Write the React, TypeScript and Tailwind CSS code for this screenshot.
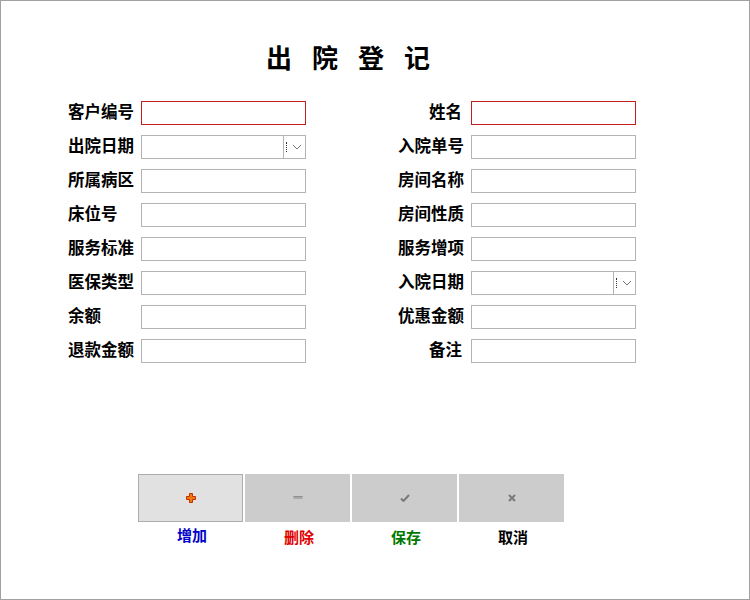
import React from "react";

const font = { fontFamily: '"Noto Sans CJK SC", "Liberation Sans", sans-serif' };

function Input({ red }: { red?: boolean }) {
  return (
    <div
      className={
        "h-[24px] w-[165px] bg-white border " +
        (red ? "border-[#c41e1e]" : "border-[#b4b4b4]")
      }
    />
  );
}

function DateInput() {
  return (
    <div className="h-[24px] w-[165px] flex border border-[#b4b4b4] bg-white">
      <div className="flex-1 border-r border-[#b4b4b4]" />
      <div className="w-[21px] flex items-center">
        <div className="ml-[2px] h-[10px] w-0 border-l border-dotted border-[#333]" />
        <svg width="10" height="6" viewBox="0 0 10 6" className="ml-[5px]">
          <path d="M1 1 L5 5 L9 1" fill="none" stroke="#777" strokeWidth="1" />
        </svg>
      </div>
    </div>
  );
}

function Label({ text, pl = 0 }: { text: string; pl?: number }) {
  return (
    <div
      className="w-[73px] h-[24px] flex items-center pb-[3px] text-[16.5px] font-bold text-black leading-none"
      style={{ paddingLeft: pl }}
    >
      {text}
    </div>
  );
}

type Field = { label: string; pl?: number; kind?: "red" | "date" | "plain" };

const left: Field[] = [
  { label: "客户编号", kind: "red" },
  { label: "出院日期", kind: "date" },
  { label: "所属病区" },
  { label: "床位号" },
  { label: "服务标准" },
  { label: "医保类型" },
  { label: "余额" },
  { label: "退款金额" },
];

const right: Field[] = [
  { label: "姓名", pl: 31, kind: "red" },
  { label: "入院单号" },
  { label: "房间名称" },
  { label: "房间性质" },
  { label: "服务增项" },
  { label: "入院日期", kind: "date" },
  { label: "优惠金额" },
  { label: "备注", pl: 31 },
];

function Col({ items }: { items: Field[] }) {
  return (
    <div className="flex flex-col gap-[10px]">
      {items.map((f) => (
        <div key={f.label} className="flex items-center">
          <Label text={f.label} pl={f.pl} />
          {f.kind === "date" ? <DateInput /> : <Input red={f.kind === "red"} />}
        </div>
      ))}
    </div>
  );
}

function PlusIcon() {
  return (
    <svg width="10" height="10" viewBox="0 0 10 10">
      <path d="M3.5 0.5h3v3h3v3h-3v3h-3v-3h-3v-3h3z" fill="#f07a10" stroke="#c03000" strokeWidth="1" />
    </svg>
  );
}
function MinusIcon() {
  return (
    <svg width="10" height="6" viewBox="0 0 10 6">
      <rect x="0.5" y="1" width="9" height="3" fill="#a8a8a8" />
      <rect x="0.5" y="1" width="9" height="1" fill="#909090" />
    </svg>
  );
}
function CheckIcon() {
  return (
    <svg width="10" height="8" viewBox="0 0 10 8">
      <path d="M1 4.5 L3.5 7 L9 1" fill="none" stroke="#7a7a7a" strokeWidth="2" />
    </svg>
  );
}
function XIcon() {
  return (
    <svg width="8" height="8" viewBox="0 0 8 8">
      <path d="M1 1 L7 7 M7 1 L1 7" fill="none" stroke="#7a7a7a" strokeWidth="2" />
    </svg>
  );
}

const buttons = [
  { label: "增加", color: "text-[#0000c8]", icon: <PlusIcon />, bg: "bg-[#e1e1e1] border border-[#adadad]", mt: "mt-[3px]" },
  { label: "删除", color: "text-[#e00000]", icon: <MinusIcon />, bg: "bg-[#cccccc]", mt: "mt-[5px]" },
  { label: "保存", color: "text-[#007a00]", icon: <CheckIcon />, bg: "bg-[#cccccc]", mt: "mt-[5px]" },
  { label: "取消", color: "text-black", icon: <XIcon />, bg: "bg-[#cccccc]", mt: "mt-[5px]" },
];

export default function App() {
  return (
    <div
      className="w-[750px] h-[600px] border border-[#a0a0a0] bg-white box-border flex flex-col"
      style={font}
    >
      <div className="pt-[41px] flex justify-center pr-[34px]">
        <div className="text-[26px] font-bold leading-[30px] tracking-[20px] text-black">出院登记</div>
      </div>
      <div className="mt-[29px] flex pl-[67px] gap-[92px]">
        <Col items={left} />
        <Col items={right} />
      </div>
      <div className="mt-[111px] flex pl-[137px] gap-[2px]">
        {buttons.map((b) => (
          <div key={b.label} className="flex flex-col items-center w-[105px]">
            <div className={"w-[105px] h-[48px] flex items-center justify-center box-border " + b.bg}>
              {b.icon}
            </div>
            <div className={b.mt + " pl-[3px] text-[15px] font-bold leading-[20px] " + b.color}>{b.label}</div>
          </div>
        ))}
      </div>
    </div>
  );
}
